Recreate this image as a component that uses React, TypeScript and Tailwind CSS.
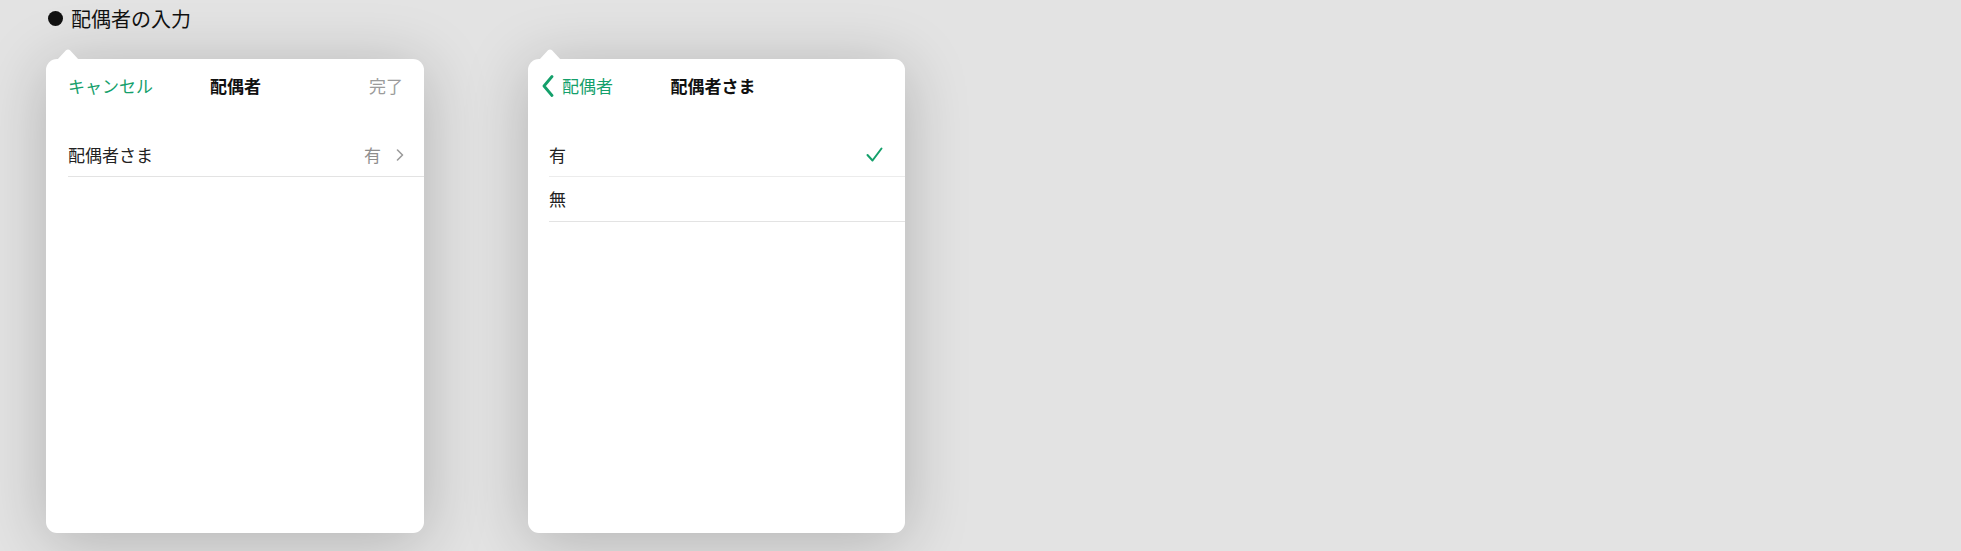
const font = "font-['Hiragino_Sans','Noto_Sans_CJK_JP',sans-serif]";

function Arrow() {
  return (
    <svg
      className="absolute -top-[11px] left-[11px] w-[22px] h-[12px]"
      viewBox="0 0 22 12"
      fill="none"
      xmlns="http://www.w3.org/2000/svg"
    >
      <path d="M0 12L9 2.2C10 1.1 12 1.1 13 2.2L22 12z" fill="#ffffff" />
    </svg>
  );
}

function Chevron() {
  return (
    <svg className="w-[8px] h-[12px]" viewBox="0 0 8 12" fill="none" xmlns="http://www.w3.org/2000/svg">
      <path d="M1.5 1l5 5-5 5" stroke="#9b9b9b" strokeWidth="1.6" strokeLinecap="round" strokeLinejoin="round" />
    </svg>
  );
}

function BackChevron() {
  return (
    <svg className="w-[12px] h-[22px]" viewBox="0 0 12 22" fill="none" xmlns="http://www.w3.org/2000/svg">
      <path d="M10 1.5L2 11l8 9.5" stroke="#14a06b" strokeWidth="2.8" strokeLinecap="round" strokeLinejoin="round" />
    </svg>
  );
}

function Check() {
  return (
    <svg className="w-[17px] h-[15px]" viewBox="0 0 17 15" fill="none" xmlns="http://www.w3.org/2000/svg">
      <path d="M1.5 8l5 5.5L15.5 1.5" stroke="#14a06b" strokeWidth="2" strokeLinecap="round" strokeLinejoin="round" />
    </svg>
  );
}

export default function App() {
  return (
    <div className={`w-[1961px] h-[551px] bg-[#e3e3e3] overflow-hidden ${font}`}>
      {/* Heading */}
      <div className="flex items-center gap-[8px] pl-[48px] pt-[6px] h-[31px] text-[20px] leading-[24px] text-[#111]">
        <span className="block w-[15px] h-[15px] rounded-full bg-[#111]" />
        <span>配偶者の入力</span>
      </div>

      <div className="flex gap-[104px] pl-[46px] pt-[28px]">
        {/* Panel 1 */}
        <div className="relative w-[378px] h-[474px] bg-white rounded-[11px] shadow-[0_8px_64px_rgba(0,0,0,0.22)]">
          <Arrow />
          <div className="grid grid-cols-[1fr_auto_1fr] items-center h-[54px] pl-[22px] pr-[21px] text-[17px]">
            <span className="text-[#14a06b]">キャンセル</span>
            <span className="font-bold text-[#111]">配偶者</span>
            <span className="justify-self-end text-[#9b9b9b]">完了</span>
          </div>
          <div className="mt-[20px] ml-[22px]">
            <div className="flex items-center justify-between h-[44px] pr-[20px] border-b border-[#e3e3e3] text-[17px]">
              <span className="text-[#222]">配偶者さま</span>
              <span className="flex items-center gap-[15px] text-[#8e8e8e]">
                有
                <Chevron />
              </span>
            </div>
          </div>
        </div>

        {/* Panel 2 */}
        <div className="relative w-[377px] h-[474px] bg-white rounded-[11px] shadow-[0_8px_64px_rgba(0,0,0,0.22)]">
          <Arrow />
          <div className="grid grid-cols-[1fr_auto_1fr] items-center h-[54px] pl-[14px] pr-[21px] text-[17px]">
            <span className="flex items-center gap-[8px] text-[#14a06b]">
              <BackChevron />
              配偶者
            </span>
            <span className="font-bold text-[#111]">配偶者さま</span>
            <span />
          </div>
          <div className="mt-[20px] ml-[21px] text-[17px] text-[#222]">
            <div className="flex items-center justify-between h-[44px] pr-[22px] border-b border-[#ececec]">
              <span>有</span>
              <Check />
            </div>
            <div className="flex items-center h-[45px] border-b border-[#e3e3e3]">
              <span>無</span>
            </div>
          </div>
        </div>
      </div>
    </div>
  );
}
